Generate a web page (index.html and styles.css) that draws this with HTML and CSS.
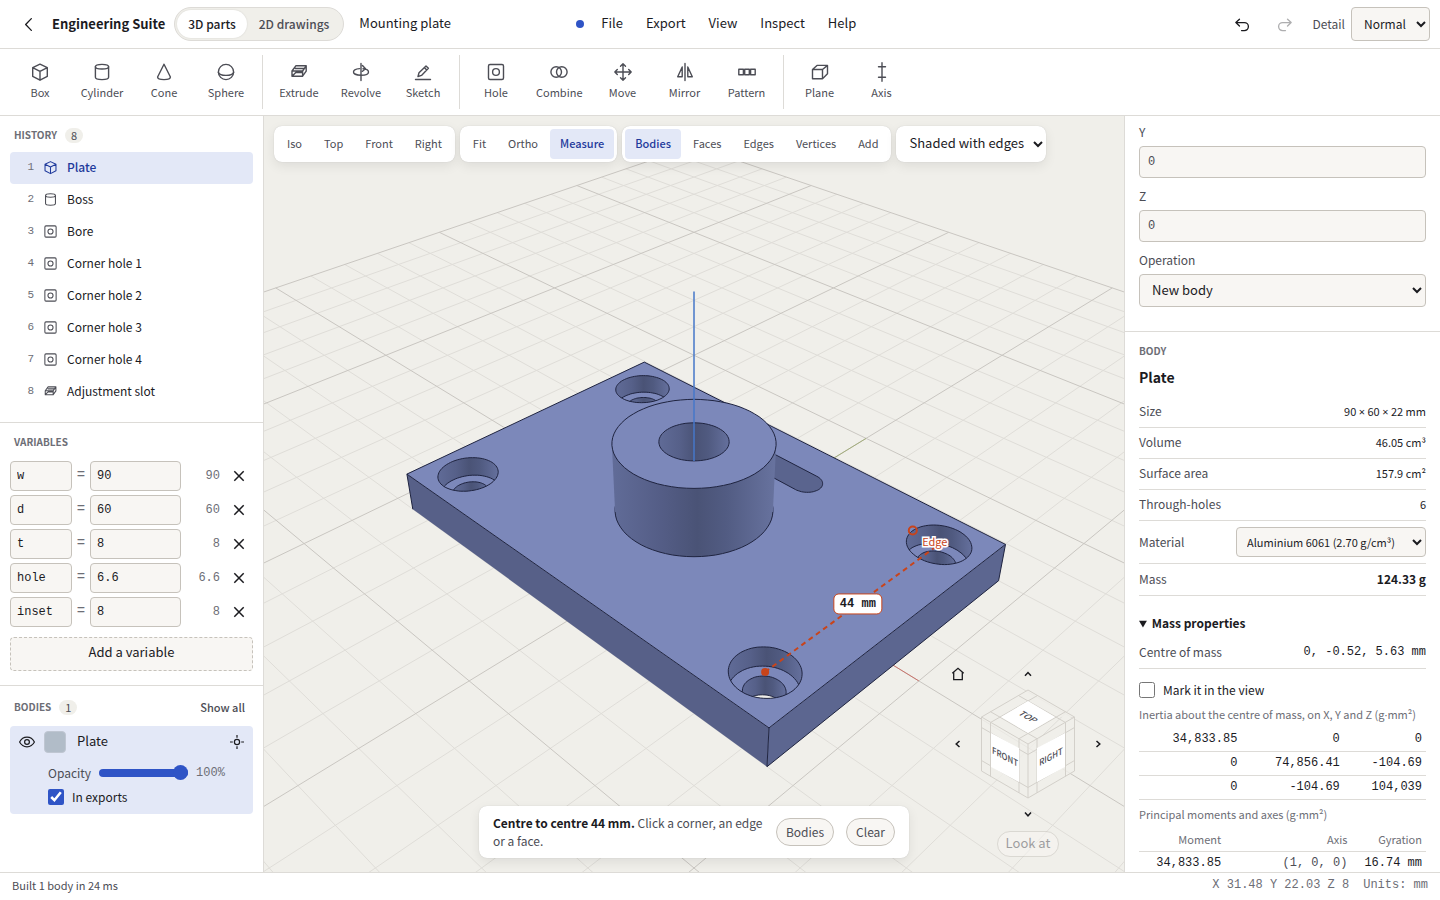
FILE: index.html
```html
<!DOCTYPE html>
<html lang="en">
<head>
<meta charset="utf-8">
<title>Mounting plate – Engineering Suite</title>
<link rel="stylesheet" href="styles.css">
</head>
<body>
<svg class="defs" aria-hidden="true">
  <symbol id="i-box" viewBox="0 0 20 20"><path d="M10 2.200 17.300 5.700v8.700L10 18.200l-7.300-3.800V5.700zM2.700 5.700 10 9.300l7.300-3.600M10 9.300v8.900"/></symbol>
  <symbol id="i-cylinder" viewBox="0 0 20 20"><ellipse cx="10" cy="4.700" rx="6.600" ry="2.300"/><path d="M3.400 4.700v10.600c0 1.300 3 2.300 6.600 2.300s6.600-1 6.600-2.300V4.700"/></symbol>
  <symbol id="i-cone" viewBox="0 0 20 20"><path d="M10 2.200 3.600 15c0 1.500 2.900 2.600 6.400 2.600s6.400-1.100 6.400-2.600z"/></symbol>
  <symbol id="i-sphere" viewBox="0 0 20 20"><circle cx="10" cy="10" r="7.600"/><path d="M2.400 10.500c1.200 3.800 14 3.800 15.200 0"/></symbol>
  <symbol id="i-extrude" viewBox="0 0 20 20"><path d="M3 9 6.800 3.800h10.400L13.600 9zM3 9v5.200h10.600V9M13.600 14.200l3.600-5V3.800M3 14.200l3.800-3.700h6.500M6.300 6.500h8.500"/></symbol>
  <symbol id="i-revolve" viewBox="0 0 20 20"><path d="M10 1.500v17M12 6.700c3.200.3 5.500 1.600 5.500 3.200 0 1.900-3.300 3.300-7.500 3.300s-7.500-1.400-7.500-3.300c0-1.700 2.600-3 6-3.300M11.500 3.500l3 3.300-3 2.500"/></symbol>
  <symbol id="i-sketch" viewBox="0 0 20 20"><path d="M2.500 17.500h15M5 14.500l1-3.700L13 3.900l2.400 2.400-6.900 7.100zM11.300 5.600l2.400 2.400"/></symbol>
  <symbol id="i-hole" viewBox="0 0 20 20"><rect x="2.500" y="2.500" width="15" height="15" rx="1.500"/><circle cx="10" cy="10" r="3.400"/></symbol>
  <symbol id="i-combine" viewBox="0 0 20 20"><circle cx="7.200" cy="10" r="5.300"/><circle cx="12.800" cy="10" r="5.300"/></symbol>
  <symbol id="i-move" viewBox="0 0 20 20"><path d="M10 1.800v16.400M1.800 10h16.400M7.500 4.300 10 1.800l2.500 2.500M7.500 15.700l2.500 2.500 2.500-2.500M4.300 7.500 1.800 10l2.500 2.500M15.700 7.500l2.500 2.500-2.500 2.500"/></symbol>
  <symbol id="i-mirror" viewBox="0 0 20 20"><path d="M10 1.500v17M7.200 5v9.700H2.700zM12.800 5v9.700h4.500z"/></symbol>
  <symbol id="i-pattern" viewBox="0 0 20 20"><rect x="1.800" y="7.200" width="4.600" height="5.600"/><rect x="7.700" y="7.200" width="4.600" height="5.600"/><rect x="13.600" y="7.200" width="4.600" height="5.600"/></symbol>
  <symbol id="i-plane" viewBox="0 0 20 20"><path d="M2.500 7.500h10v9.300h-10zM2.500 7.500 7 3.400h10.500l-5 4.100M17.500 3.400v8.300l-5 5.100"/></symbol>
  <symbol id="i-axis" viewBox="0 0 20 20"><path d="M10 .8v18.400M6.500 4.800h7M6.500 15.200h7"/></symbol>
  <symbol id="i-close" viewBox="0 0 16 16"><path d="m3.300 3.300 9.400 9.400M12.700 3.300l-9.400 9.400"/></symbol>
</svg>

<header class="topbar">
  <button class="icon-btn" aria-label="Back"><svg viewBox="0 0 20 20"><path d="M13 3.800 7 10l6 6.200"/></svg></button>
  <h1 class="brand">Engineering Suite</h1>
  <div class="segmented">
    <button class="seg on">3D parts</button>
    <button class="seg">2D drawings</button>
  </div>
  <input class="doc-name" aria-label="Document name" value="Mounting plate">
  <span class="save-dot"></span>
  <nav class="menus">
    <button>File</button><button>Export</button><button>View</button><button>Inspect</button><button>Help</button>
  </nav>
  <div class="top-right">
    <button class="icon-btn" aria-label="Undo"><svg viewBox="0 0 20 20"><path d="M6.800 4.400 3 8l3.800 3.600M3 8h9a4.200 4.200 0 0 1 0 8.400H9"/></svg></button>
    <button class="icon-btn dim" aria-label="Redo"><svg viewBox="0 0 20 20"><path d="M13.200 4.400 17 8l-3.800 3.600M17 8H8a4.200 4.200 0 0 0 0 8.400h3"/></svg></button>
    <label class="detail" for="detail">Detail</label>
    <select id="detail" class="field detail-select"><option>Normal</option></select>
  </div>
</header>

<div class="toolbar">
  <div class="tool-group">
    <button class="tool"><svg><use href="#i-box"/></svg>Box</button>
    <button class="tool"><svg><use href="#i-cylinder"/></svg>Cylinder</button>
    <button class="tool"><svg><use href="#i-cone"/></svg>Cone</button>
    <button class="tool"><svg><use href="#i-sphere"/></svg>Sphere</button>
  </div>
  <div class="tool-group">
    <button class="tool"><svg><use href="#i-extrude"/></svg>Extrude</button>
    <button class="tool"><svg><use href="#i-revolve"/></svg>Revolve</button>
    <button class="tool"><svg><use href="#i-sketch"/></svg>Sketch</button>
  </div>
  <div class="tool-group">
    <button class="tool"><svg><use href="#i-hole"/></svg>Hole</button>
    <button class="tool"><svg><use href="#i-combine"/></svg>Combine</button>
    <button class="tool"><svg><use href="#i-move"/></svg>Move</button>
    <button class="tool"><svg><use href="#i-mirror"/></svg>Mirror</button>
    <button class="tool"><svg><use href="#i-pattern"/></svg>Pattern</button>
  </div>
  <div class="tool-group">
    <button class="tool"><svg><use href="#i-plane"/></svg>Plane</button>
    <button class="tool"><svg><use href="#i-axis"/></svg>Axis</button>
  </div>
</div>

<main class="work">
  <aside class="left">
    <section class="block history">
      <h2 class="cap">HISTORY <span class="badge">8</span></h2>
      <ol class="steps">
        <li class="on"><span>1</span><svg><use href="#i-box"/></svg>Plate</li>
        <li><span>2</span><svg><use href="#i-cylinder"/></svg>Boss</li>
        <li><span>3</span><svg><use href="#i-hole"/></svg>Bore</li>
        <li><span>4</span><svg><use href="#i-hole"/></svg>Corner hole 1</li>
        <li><span>5</span><svg><use href="#i-hole"/></svg>Corner hole 2</li>
        <li><span>6</span><svg><use href="#i-hole"/></svg>Corner hole 3</li>
        <li><span>7</span><svg><use href="#i-hole"/></svg>Corner hole 4</li>
        <li><span>8</span><svg><use href="#i-extrude"/></svg>Adjustment slot</li>
      </ol>
    </section>
    <section class="block variables">
      <h2 class="cap">VARIABLES</h2>
      <div class="vars">
        <div class="var"><input class="field mono" aria-label="Name" value="w"><span>=</span><input class="field mono" aria-label="Value of w" value="90"><output>90</output><button aria-label="Remove w"><svg><use href="#i-close"/></svg></button></div>
        <div class="var"><input class="field mono" aria-label="Name" value="d"><span>=</span><input class="field mono" aria-label="Value of d" value="60"><output>60</output><button aria-label="Remove d"><svg><use href="#i-close"/></svg></button></div>
        <div class="var"><input class="field mono" aria-label="Name" value="t"><span>=</span><input class="field mono" aria-label="Value of t" value="8"><output>8</output><button aria-label="Remove t"><svg><use href="#i-close"/></svg></button></div>
        <div class="var"><input class="field mono" aria-label="Name" value="hole"><span>=</span><input class="field mono" aria-label="Value of hole" value="6.6"><output>6.6</output><button aria-label="Remove hole"><svg><use href="#i-close"/></svg></button></div>
        <div class="var"><input class="field mono" aria-label="Name" value="inset"><span>=</span><input class="field mono" aria-label="Value of inset" value="8"><output>8</output><button aria-label="Remove inset"><svg><use href="#i-close"/></svg></button></div>
      </div>
      <button class="add-var">Add a variable</button>
    </section>
    <section class="block bodies">
      <h2 class="cap">BODIES <span class="badge">1</span><button class="show-all">Show all</button></h2>
      <div class="body-card">
        <div class="body-head">
          <button class="eye" aria-label="Hide Plate"><svg viewBox="0 0 18 18"><path d="M1.600 9C3.200 5.900 5.900 4.200 9 4.200s5.800 1.700 7.400 4.800c-1.600 3.100-4.300 4.800-7.400 4.800S3.200 12.100 1.600 9z"/><circle cx="9" cy="9" r="2.400"/></svg></button>
          <span class="swatch"></span>
          <span class="body-name">Plate</span>
          <button class="eye" aria-label="Isolate Plate"><svg viewBox="0 0 18 18"><circle cx="9" cy="9" r="2.600"/><path d="M9 2v2.800M9 13.200V16M2 9h2.800M13.200 9H16"/></svg></button>
        </div>
        <div class="opacity"><label for="op">Opacity</label><input id="op" type="range" min="0" max="100" value="100"><output>100%</output></div>
        <label class="check"><input type="checkbox" checked>In exports</label>
      </div>
    </section>
  </aside>

  <section class="viewport">
    <svg id="scene" class="scene" viewBox="0 0 860 756" preserveAspectRatio="xMidYMid slice"></svg>
    <div class="view-tools">
      <div class="pill-group"><button>Iso</button><button>Top</button><button>Front</button><button>Right</button></div>
      <div class="pill-group"><button>Fit</button><button>Ortho</button><button class="on">Measure</button></div>
      <div class="pill-group"><button class="on">Bodies</button><button>Faces</button><button>Edges</button><button>Vertices</button><button>Add</button></div>
      <select class="shade-select" aria-label="Shading"><option>Shaded with edges</option></select>
    </div>

    <div class="hint">
      <p><b>Centre to centre 44 mm.</b> Click a corner, an edge or a face.</p>
      <button class="pill">Bodies</button>
      <button class="pill">Clear</button>
    </div>

    <div class="navigator">
      <button class="nav-btn home" aria-label="Home view"><svg viewBox="0 0 16 16"><path d="M2.300 7.200 8 2.300l5.700 4.900M3.700 6.200v7.500h8.600V6.200"/></svg></button>
      <button class="nav-btn up" aria-label="Turn up"><svg viewBox="0 0 16 16"><path d="m5 9.800 3-3.300 3 3.300"/></svg></button>
      <button class="nav-btn lf" aria-label="Turn left"><svg viewBox="0 0 16 16"><path d="M9.500 5 6.200 8l3.300 3"/></svg></button>
      <svg class="cube" viewBox="0 0 100 112">
        <g class="cube-lines">
          <path d="M50 2 96.500 29v54L50 110 3.500 83V29zM3.500 29 50 56l46.500-27M50 56v54"/>
          <path d="M12.500 23.700 59 50.700v54M87.500 23.700 41 50.700v54M40.500 7.500 87.500 34.500v54M59.500 7.500 12.500 34.500v54"/>
          <path d="M3.500 39.500 50 66.500l46.500-27M3.500 72.500 50 99.500l46.500-27"/>
        </g>
        <path class="cube-face" d="M50 13 77 29 50 45 23 29zM13 45l28 15v34L13 79zM59 60l28-15v34L59 94z"/>
        <text transform="matrix(.87 .5 -.87 .5 50 29)" x="0" y="3">TOP</text>
        <text transform="matrix(.87 .47 0 1 27 69)" x="0" y="3">FRONT</text>
        <text transform="matrix(.87 -.47 0 1 73 69)" x="0" y="3">RIGHT</text>
      </svg>
      <button class="nav-btn rt" aria-label="Turn right"><svg viewBox="0 0 16 16"><path d="M6.500 5l3.300 3-3.300 3"/></svg></button>
      <button class="nav-btn dn" aria-label="Turn down"><svg viewBox="0 0 16 16"><path d="m5 6.500 3 3.300 3-3.300"/></svg></button>
      <button class="pill look" disabled>Look at</button>
    </div>
  </section>

  <aside class="right">
    <section class="placement">
      <label for="py">Y</label><input id="py" class="field mono" value="0">
      <label for="pz">Z</label><input id="pz" class="field mono" value="0">
      <label for="opn">Operation</label><select id="opn" class="field"><option>New body</option></select>
    </section>
    <section class="props">
      <h2 class="cap">BODY</h2>
      <h3 class="body-title">Plate</h3>
      <dl class="facts">
        <div><dt>Size</dt><dd>90 <span class="sym">×</span> 60 <span class="sym">×</span> 22 mm</dd></div>
        <div><dt>Volume</dt><dd>46.05 cm³</dd></div>
        <div><dt>Surface area</dt><dd>157.9 cm²</dd></div>
        <div><dt>Through-holes</dt><dd>6</dd></div>
        <div class="material"><dt><label for="mat">Material</label></dt><dd><select id="mat" class="field"><option>Aluminium 6061 (2.70 g/cm³)</option></select></dd></div>
        <div class="mass"><dt>Mass</dt><dd>124.33 g</dd></div>
      </dl>
      <details open>
        <summary>Mass properties</summary>
        <dl class="facts com"><div><dt>Centre of mass</dt><dd class="mono">0, -0.52, 5.63 mm</dd></div></dl>
        <label class="check"><input type="checkbox">Mark it in the view</label>
        <table class="nums inertia">
          <caption>Inertia about the centre of mass, on X, Y and Z (g<span class="sym">·</span>mm²)</caption>
          <tbody>
            <tr><td>34,833.85</td><td>0</td><td>0</td></tr>
            <tr><td>0</td><td>74,856.41</td><td>-104.69</td></tr>
            <tr><td>0</td><td>-104.69</td><td>104,039</td></tr>
          </tbody>
        </table>
        <table class="nums moments">
          <caption>Principal moments and axes (g<span class="sym">·</span>mm²)</caption>
          <thead><tr><th>Moment</th><th>Axis</th><th>Gyration</th></tr></thead>
          <tbody><tr><td>34,833.85</td><td class="soft">(1, 0, 0)</td><td>16.74 mm</td></tr></tbody>
        </table>
      </details>
    </section>
  </aside>
</main>

<footer class="status">
  <span>Built 1 body in 24 ms</span>
  <span class="mono coords">X 31.48 Y 22.03 Z 8</span>
  <span class="mono">Units: mm</span>
</footer>
<script src="scene.js"></script>
</body>
</html>
```
FILE: styles.css
```css
:root {
  --ink: #1b1b1f;
  --mid: #4c4d55;
  --soft: #6d6e76;
  --line: #dddbd7;
  --edge: #c6c2bb;
  --field: #f8f6f3;
  --wash: #f0efea;
  --blue: #2f54c6;
  --blue-ink: #1f3a9c;
  --tint: #e3e8f7;
  --orange: #c8441b;
  --sans: "Noto Sans CJK SC", "Noto Sans", sans-serif;
  --mono: "Liberation Mono", monospace;
}
* { box-sizing: border-box; }
body {
  margin: 0;
  height: 100vh;
  display: flex;
  flex-direction: column;
  overflow: hidden;
  background: #fff;
  color: var(--ink);
  font: 13px/20px var(--sans);
}
h1, h2, h3, p, dl, dd, ol { margin: 0; padding: 0; }
button, input, select { font: inherit; color: inherit; margin: 0; }
button { background: none; border: 0; padding: 0; }
svg { fill: none; stroke: currentColor; }
.defs { position: absolute; width: 0; height: 0; }
.mono { font-family: var(--mono); font-size: 12px; }
.sym { font-family: "Open Sans", sans-serif; }
.field {
  background: var(--field);
  border: 1px solid var(--edge);
  border-radius: 4px;
}

/* Top bar */
.topbar {
  flex: none;
  display: flex;
  align-items: center;
  height: 49px;
  padding: 0 10px;
  border-bottom: 1px solid var(--line);
}
.icon-btn { display: grid; place-items: center; width: 36px; height: 36px; }
.icon-btn svg { width: 19px; height: 19px; stroke-width: 1.4; stroke-linecap: round; stroke-linejoin: round; }
.dim { opacity: .35; }
.brand { margin: 0 9px 0 6px; font-size: 13px; font-weight: 700; white-space: nowrap; }
.segmented {
  display: flex;
  padding: 2px;
  border: 1px solid var(--line);
  border-radius: 17px;
  background: var(--wash);
}
.seg { height: 28px; padding: 0 12px; border-radius: 14px; font-size: 12px; font-weight: 500; color: var(--mid); white-space: nowrap; }
.seg.on { padding: 0 11px; background: #fff; color: var(--ink); box-shadow: 0 0 2px rgba(0, 0, 0, .12); }
.doc-name { width: 208px; margin-left: 6px; padding: 0 9px 4px; height: 30px; border: 0; background: none; }
.save-dot { width: 8px; height: 8px; margin-left: 18px; border-radius: 50%; background: var(--blue); }
.menus { display: flex; margin-left: 5px; }
.menus button { padding: 0 11px 3px 12px; height: 30px; }
.top-right { display: flex; align-items: center; margin-left: auto; }
.top-right .icon-btn + .icon-btn { margin-left: 6px; }
.detail { margin: 0 6px 0 10px; font-size: 12px; color: var(--mid); }
.detail-select { height: 34px; width: 79px; padding: 0 0 2px 8px; font-size: 12px; }

/* Modelling tools */
.toolbar { flex: none; display: flex; padding: 6px 4px; height: 67px; border-bottom: 1px solid var(--line); }
.tool-group { display: flex; gap: 2px; padding: 0 6px; }
.tool-group + .tool-group { border-left: 1px solid var(--line); }
.tool {
  display: flex;
  flex-direction: column;
  align-items: center;
  min-width: 60px;
  padding: 7px 8px 0;
  font-size: 11px;
  line-height: 18px;
  gap: 1px;
  color: var(--mid);
}
.tool svg { width: 20px; height: 20px; stroke-width: 1.4; stroke-linejoin: round; stroke-linecap: round; }

/* Work area */
.work { flex: 1; display: flex; min-height: 0; }
.left { flex: none; width: 264px; border-right: 1px solid var(--line); overflow: hidden; }
.block { padding: 10px; }
.block + .block { border-top: 1px solid var(--line); }
.cap { display: flex; align-items: center; font-size: 10px; line-height: 20px; font-weight: 700; color: var(--soft); }
.left .cap { padding: 0 8px 0 4px; }
.badge { margin-left: 8px; padding: 0 6px; border-radius: 8px; background: var(--wash); font-size: 11px; line-height: 15px; font-weight: 400; color: var(--mid); }
.steps { list-style: none; margin-top: 7px; }
.steps li { display: flex; align-items: center; height: 32px; padding-bottom: 2px; border-radius: 4px; font-size: 12px; }
.steps span { width: 24px; margin-right: 9px; text-align: right; font: 11px var(--mono); color: var(--soft); }
.steps svg { width: 15px; height: 15px; margin-right: 9px; stroke-width: 1.4; stroke-linejoin: round; color: var(--mid); }
.steps .on { background: var(--tint); color: var(--blue-ink); font-weight: 500; }
.steps .on svg { color: var(--blue-ink); }
.history { padding-top: 9px; padding-bottom: 14px; }
.variables { padding-top: 9px; padding-bottom: 14px; }
.vars { display: grid; gap: 4px; margin-top: 9px; }
.var { display: grid; grid-template-columns: 62px 18px 91px 1fr 28px; align-items: center; }
.var input { width: 100%; height: 30px; padding: 0 6px; }
.var span, .var output { font: 12px var(--mono); text-align: center; color: var(--soft); }
.var span { font-size: 14px; padding-bottom: 2px; }
.var output { padding-right: 5px; text-align: right; }
.var button { display: grid; place-items: center; height: 30px; }
.var svg { width: 16px; height: 16px; stroke-width: 1.5; }
.add-var {
  width: 100%;
  height: 34px;
  margin-top: 10px;
  padding-bottom: 4px;
  border: 1px dashed var(--edge);
  border-radius: 4px;
  background: var(--field);
}
.block.bodies { padding-top: 11px; }
.show-all { margin-left: auto; font-size: 11px; font-weight: 500; color: var(--mid); }
.body-card { margin-top: 9px; padding: 0 7px 8px 8px; border-radius: 4px; background: var(--tint); }
.body-head { display: flex; align-items: center; height: 32px; }
.eye { display: grid; width: 18px; }
.eye svg { width: 18px; height: 18px; stroke-width: 1.2; }
.swatch { width: 22px; height: 22px; margin: 0 11px 0 8px; border-radius: 4px; background: #b1bcc8; border: 1px solid #bfc6d2; }
.body-name { flex: 1; padding-bottom: 2px; }
.opacity { display: flex; align-items: center; height: 30px; margin-left: 30px; font-size: 12px; color: var(--mid); }
.opacity input {
  appearance: none;
  width: 89px;
  height: 16px;
  margin: 0 8px;
  background: none;
}
.opacity input::-webkit-slider-runnable-track { height: 8px; border-radius: 4px; background: var(--blue); }
.opacity input::-webkit-slider-thumb { appearance: none; width: 15px; height: 15px; margin-top: -4px; border-radius: 50%; background: var(--blue); }
.opacity output { font: 12px var(--mono); color: var(--soft); }
.check { display: flex; align-items: center; gap: 8px; font-size: 12px; }
.check input { width: 16px; height: 16px; accent-color: var(--blue); }
.body-card .check { margin-left: 30px; height: 18px; }

/* Viewport */
.viewport { position: relative; flex: 1; min-width: 0; overflow: hidden; background: var(--wash); }
.scene { display: block; width: 100%; height: 100%; }
.view-tools { position: absolute; top: 10px; left: 10px; display: flex; gap: 5px; }
.pill-group, .shade-select, .hint { border: 0; border-radius: 8px; background: #fff; box-shadow: 0 0 1px rgba(0, 0, 0, .2), 0 4px 12px rgba(0, 0, 0, .08); }
.pill-group { display: flex; gap: 2px; padding: 3px; }
.pill-group button { height: 30px; padding: 0 10px 2px; border-radius: 4px; font-size: 11px; color: var(--mid); }
.pill-group .on { background: var(--tint); color: var(--blue-ink); font-weight: 500; }
.shade-select { height: 36px; width: 150px; padding: 0 0 3px 9px; }
.hint {
  position: absolute;
  bottom: 14px;
  left: 50%;
  transform: translateX(-50%);
  display: flex;
  align-items: center;
  gap: 12px;
  width: 430px;
  padding: 8px 14px;
  font-size: 12px;
  line-height: 18px;
  color: var(--mid);
}
.hint p { flex: 1; margin-right: -8px; }
.hint b { font-weight: 700; color: var(--ink); }
.pill { height: 28px; padding: 0 9px; border: 1px solid var(--edge); border-radius: 14px; background: var(--field); font-size: 12px; color: var(--mid); }
.look { opacity: .5; grid-column: 1 / 4; height: 26px; padding: 0 8px 2px; font-size: 13px; }
.navigator {
  position: absolute;
  right: 14px;
  bottom: 10px;
  display: grid;
  grid-template-columns: 24px 116px 24px;
  grid-template-rows: 24px 116px 24px 36px;
  place-items: center;
}
.nav-btn { display: grid; }
.nav-btn svg { width: 16px; height: 16px; stroke-width: 1.5; }
.home svg { stroke-width: 1.3; }
.up { grid-column: 2; }
.lf { grid-column: 1; grid-row: 2; }
.rt { grid-column: 3; grid-row: 2; }
.dn { grid-column: 2; grid-row: 3; }
.cube { width: 100px; height: 112px; grid-column: 2; grid-row: 2; }
.cube-lines { stroke: #d3d0ca; stroke-width: 1; }
.cube > path.cube-face { fill: #fff; stroke: none; }
.cube-lines path:first-child { fill: rgba(240, 239, 234, .8); }
.cube text { font: 500 9px var(--sans); fill: var(--mid); stroke: none; text-anchor: middle; }

/* Scene drawing */
.grid-minor { stroke: #dfddd8; }
.grid-major { stroke: #c9c6c1; }
.axis-x { stroke: #c9746c; }
.axis-y { stroke: #a3ad7c; }
.axis-z { stroke: #4677c8; stroke-width: 1.5; }
.rim { stroke: #1f2440; stroke-linejoin: round; }
.f-top { fill: #7c88ba; }
.f-left { fill: #576088; }
.f-right { fill: #5c6690; }
.f-slot { fill: #5a648e; }
.f-wall { fill: url(#wall); }
.f-boss { fill: url(#boss); }
.f-void { fill: #f0efea; }
.none { stroke: none; }
.dim-line { stroke: var(--orange); stroke-width: 2; stroke-dasharray: 5 4; }
.dim-dot { fill: var(--orange); stroke: none; }
.dim-ring { stroke: var(--orange); stroke-width: 2; }
.dim-box { fill: #fff; stroke: var(--orange); stroke-width: 1; }
.dim-text { font: 700 12px var(--mono); fill: var(--ink); stroke: none; text-anchor: middle; }
.snap-text { font: 11px var(--sans); fill: var(--orange); stroke: #fff; stroke-width: 3; paint-order: stroke; text-anchor: middle; }

/* Inspector */
.right { flex: none; width: 316px; padding-top: 6px; border-left: 1px solid var(--line); overflow: hidden; }
.placement { display: grid; padding: 0 14px 24px; font-size: 12px; color: var(--mid); }
.placement label { line-height: 20px; margin-bottom: 4px; }
.placement input { height: 32px; padding: 0 8px; margin-bottom: 8px; color: var(--mid); }
.placement select { height: 33px; padding: 0 0 3px 8px; font-size: 13px; color: var(--ink); }
.props { padding: 9px 14px; border-top: 1px solid var(--line); }
.body-title { margin: 6px 0 10px; font-size: 14px; font-weight: 700; }
.facts div { display: flex; justify-content: space-between; align-items: center; min-height: 31px; padding-bottom: 2px; border-bottom: 1px solid var(--line); font-size: 12px; }
.facts dt { color: var(--mid); }
.facts dd { font-size: 11px; }
.facts .material { min-height: 43px; padding-bottom: 0; }
.material select { width: 190px; height: 30px; padding: 0 0 0 6px; }
.facts .mass { min-height: 32px; }
.mass dd { font-size: 12px; font-weight: 700; }
.facts .mono { font-size: 12px; }
details { margin-top: 17px; }
summary { font-size: 12px; font-weight: 700; }
.com { margin-bottom: 11px; margin-top: 5px; }
.nums { width: 100%; border-collapse: collapse; font: 12px/16px var(--mono); }
.nums caption { padding: 5px 0 4px; text-align: left; font: 11px/18px var(--sans); color: var(--soft); white-space: nowrap; }
.nums td, .nums th { padding: 3px 4px 4px; text-align: right; border-bottom: 1px solid var(--line); }
.nums th { font: 11px/16px var(--sans); color: var(--soft); }
.moments th:first-child { width: 30%; }
.moments th:nth-child(2) { width: 44%; }
.soft { color: var(--mid); }

/* Status bar */
.status { flex: none; display: flex; align-items: center; gap: 14px; height: 28px; padding: 0 12px 3px; border-top: 1px solid var(--line); font-size: 11px; color: var(--mid); }
.status .mono { color: var(--soft); }
.coords { margin-left: auto; }
```
FILE: scene.js
```js
// Draws the ground grid and the plate as SVG through a perspective camera.
(function () {
  const svg = document.getElementById('scene');
  const NS = 'http://www.w3.org/2000/svg';
  const cx = 430, cy = 378;
  const focal = 378 / Math.tan(17.5 * Math.PI / 180);
  const dist = 211.06, targetZ = 11;
  const sin = Math.sqrt(1 / 3), cos = Math.sqrt(2 / 3);

  function project(x, y, z) {
    const r = (x + y) / Math.SQRT2, u = (x - y) / Math.SQRT2, h = z - targetZ;
    const depth = dist - u * cos - h * sin;
    return [cx + focal * r / depth, cy - focal * (h * cos - u * sin) / depth];
  }
  const fmt = p => p[0].toFixed(1) + ' ' + p[1].toFixed(1);
  const path = (pts, closed) => 'M' + pts.map(fmt).join('L') + (closed ? 'Z' : '');
  const poly = (pts3) => path(pts3.map(p => project(...p)), true);
  const line = (a, b) => path([project(...a), project(...b)], false);

  function add(tag, attrs, parent, text) {
    const el = document.createElementNS(NS, tag);
    for (const k in attrs) el.setAttribute(k, attrs[k]);
    if (text) el.textContent = text;
    (parent || svg).appendChild(el);
    return el;
  }
  const shape = (d, cls, parent) => add('path', { d: d, class: cls }, parent);

  function circle(x, y, z, rad) {
    const pts = [];
    for (let i = 0; i < 72; i++) {
      const a = i * Math.PI / 36;
      pts.push([x + rad * Math.cos(a), y + rad * Math.sin(a), z]);
    }
    return pts;
  }

  const defs = add('defs', {});
  function gradient(id, units, x1, x2, stops) {
    const g = add('linearGradient', { id: id, gradientUnits: units, x1: x1, x2: x2, y1: 0, y2: 0 }, defs);
    stops.forEach(s => add('stop', { offset: s[0], 'stop-color': s[1] }, g));
  }
  gradient('wall', 'objectBoundingBox', 0, 1, [[0, '#606b97'], [.3, '#566089'], [.52, '#4a5376'], [.7, '#505a80'], [1, '#65709d']]);
  gradient('boss', 'userSpaceOnUse', 348, 512, [[0, '#616c98'], [.3, '#545d86'], [.52, '#4a5376'], [.7, '#525c83'], [1, '#68739f']]);

  let clips = 0;
  function clipTo(d, parent) {
    const id = 'clip' + (++clips);
    const c = add('clipPath', { id: id }, defs);
    add('path', { d: d }, c);
    return add('g', { 'clip-path': 'url(#' + id + ')' }, parent);
  }

  // Ground grid, 10 mm with a heavier line every 50 mm
  let minor = '', major = '';
  for (let i = -150; i <= 150; i += 10) {
    const d = line([i, -150, 0], [i, 150, 0]) + line([-150, i, 0], [150, i, 0]);
    if (i % 50) minor += d; else major += d;
  }
  shape(minor, 'grid-minor');
  shape(major, 'grid-major');
  shape(line([0, 0, 0], [50, 0, 0]), 'axis-x');
  shape(line([0, 0, 0], [0, 50, 0]), 'axis-y');

  // Plate, 90 x 60 x 8
  const L = -45, R = 45, F = -30, B = 30, T = 8;
  shape(poly([[L, F, T], [R, F, T], [R, F, 0], [L, F, 0]]), 'f-left none');
  shape(poly([[R, F, T], [R, B, T], [R, B, 0], [R, F, 0]]), 'f-right none');
  shape(line([R, F, 0], [R, B, 0]) + line([R, F, 0], [R, F, T]) + line([L, F, 0], [L, F, T]) + line([R, B, 0], [R, B, T]), 'rim');
  shape(poly([[L, F, T], [R, F, T], [R, B, T], [L, B, T]]), 'f-top rim');

  // Counterbored corner holes
  [[-37, -22], [-37, 22], [37, -22], [37, 22]].forEach(function (c) {
    const mouth = poly(circle(c[0], c[1], 8, 5.5));
    const seat = poly(circle(c[0], c[1], 4, 5.5));
    const bore = poly(circle(c[0], c[1], 4, 3.3));
    const exit = poly(circle(c[0], c[1], 0, 3.3));
    shape(mouth, 'f-wall none');
    const inMouth = clipTo(mouth);
    shape(seat, 'f-top rim', inMouth);
    shape(bore, 'f-wall rim', inMouth);
    const inBore = clipTo(bore, inMouth);
    shape(exit, 'f-void rim', inBore);
    shape(mouth, 'rim');
  });

  // Adjustment slot
  const slot = [];
  for (let a = -90; a <= 90; a += 6) {
    const t = a * Math.PI / 180;
    slot.push([9 + 3 * Math.cos(t), 20 + 3 * Math.sin(t), 8]);
  }
  slot.push([-9, 23, 8], [-9, 17, 8]);
  shape(poly(slot), 'f-slot rim');

  // Boss, radius 14, with its bore
  const foot = circle(0, 0, 8, 14).map(p => project(...p));
  const head = circle(0, 0, 22, 14).map(p => project(...p));
  const leftmost = pts => pts.reduce((a, b) => (b[0] < a[0] ? b : a));
  const rightmost = pts => pts.reduce((a, b) => (b[0] > a[0] ? b : a));
  shape(path(foot, true), 'f-boss rim');
  shape(path([leftmost(head), leftmost(foot), rightmost(foot), rightmost(head)], true), 'f-boss none');
  shape(path(head, true), 'f-top rim');
  shape(poly(circle(0, 0, 22, 6)), 'f-wall rim');
  const lip = 6 / Math.SQRT2;
  shape(path([project(0, 0, 50), project(lip, -lip, 22)], false), 'axis-z');

  // Measurement between two hole centres
  const a = project(37, -22, 8), b = project(37, 22, 8), m = project(37, 0, 8);
  shape(path([a, b], false), 'dim-line');
  add('circle', { cx: a[0], cy: a[1], r: 4, class: 'dim-dot' });
  const s = project(31.48, 22.03, 8);
  add('circle', { cx: s[0], cy: s[1], r: 4, class: 'dim-ring' });
  add('rect', { x: m[0] - 24, y: m[1] - 10, width: 48, height: 20, rx: 5, class: 'dim-box' });
  add('text', { x: m[0], y: m[1] + 3, class: 'dim-text' }, svg, '44 mm');
  add('text', { x: s[0] + 22, y: s[1] + 16, class: 'snap-text' }, svg, 'Edge');
})();
```
